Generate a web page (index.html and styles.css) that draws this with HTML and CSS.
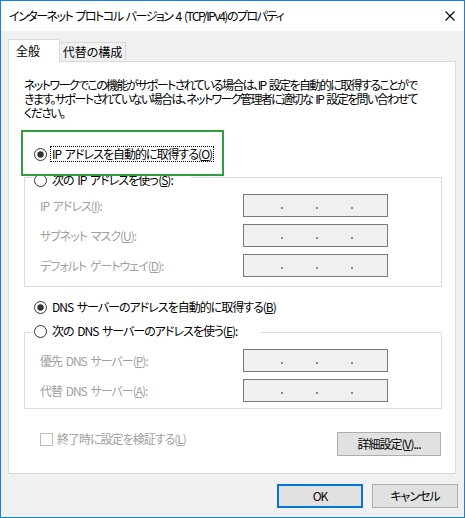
FILE: index.html
```html
<!DOCTYPE html>
<html lang="ja">
<head>
<meta charset="utf-8">
<title>インターネット プロトコル バージョン 4 (TCP/IPv4)のプロパティ</title>
<link rel="stylesheet" href="styles.css">
</head>
<body>
<div class="window">
  <div class="titlebar">
    <span class="title">インターネット プロトコル バージョン 4 (TCP/IPv4)のプロパティ</span>
    <svg class="close" width="10" height="10" viewBox="0 0 10 10"><path d="M0.5 0.5 L9.5 9.5 M9.5 0.5 L0.5 9.5" stroke="#000" stroke-width="1.1" fill="none"/></svg>
  </div>
  <div class="tabs">
    <div class="tab active">全般</div>
    <div class="tab">代替の構成</div>
  </div>
  <div class="panel">
    <p class="desc">ネットワークでこの機能がサポートされている場合は、IP 設定を自動的に取得することがで<br>きます。サポートされていない場合は、ネットワーク管理者に適切な IP 設定を問い合わせて<br>ください。</p>

    <div class="option first">
      <svg class="radio" width="13" height="13" viewBox="0 0 13 13"><circle cx="6.5" cy="6.5" r="6" fill="#fff" stroke="#333"/><circle cx="6.5" cy="6.5" r="3.2" fill="#333"/></svg>
      <span class="label focus">IP アドレスを自動的に取得する(<u>O</u>)</span>
    </div>

    <div class="group group-ip">
      <div class="legend legend-ip">
        <svg class="radio" width="13" height="13" viewBox="0 0 13 13"><circle cx="6.5" cy="6.5" r="6" fill="#fff" stroke="#333"/></svg>
        <span class="label">次の IP アドレスを使う(<u>S</u>):</span>
      </div>
      <div class="fields">
        <div class="field"><span class="flabel">IP アドレス(<u>I</u>):</span><span class="ipbox"><i></i><i></i><i></i></span></div>
        <div class="field"><span class="flabel">サブネット マスク(<u>U</u>):</span><span class="ipbox"><i></i><i></i><i></i></span></div>
        <div class="field"><span class="flabel">デフォルト ゲートウェイ(<u>D</u>):</span><span class="ipbox"><i></i><i></i><i></i></span></div>
      </div>
    </div>

    <div class="option dns-auto">
      <svg class="radio" width="13" height="13" viewBox="0 0 13 13"><circle cx="6.5" cy="6.5" r="6" fill="#fff" stroke="#333"/><circle cx="6.5" cy="6.5" r="3.2" fill="#333"/></svg>
      <span class="label">DNS サーバーのアドレスを自動的に取得する(<u>B</u>)</span>
    </div>

    <div class="group group-dns">
      <div class="legend legend-dns">
        <svg class="radio" width="13" height="13" viewBox="0 0 13 13"><circle cx="6.5" cy="6.5" r="6" fill="#fff" stroke="#333"/></svg>
        <span class="label">次の DNS サーバーのアドレスを使う(<u>E</u>):</span>
      </div>
      <div class="fields">
        <div class="field"><span class="flabel">優先 DNS サーバー(<u>P</u>):</span><span class="ipbox"><i></i><i></i><i></i></span></div>
        <div class="field"><span class="flabel">代替 DNS サーバー(<u>A</u>):</span><span class="ipbox"><i></i><i></i><i></i></span></div>
      </div>
    </div>

    <div class="bottom-row">
      <div class="check">
        <span class="checkbox"></span>
        <span class="flabel">終了時に設定を検証する(<u>L</u>)</span>
      </div>
      <button class="btn advanced">詳細設定(<u>V</u>)...</button>
    </div>
  </div>
  <div class="footer">
    <button class="btn default">OK</button>
    <button class="btn">キャンセル</button>
  </div>
  <div class="highlight"></div>
</div>
</body>
</html>
```
FILE: styles.css
```css
* { box-sizing: border-box; }
html, body { margin: 0; padding: 0; background: #fff; }
body {
  font-family: "Noto Sans CJK JP", "Noto Sans", sans-serif;
  font-size: 12px;
  color: #000;
  font-feature-settings: "palt";
  letter-spacing: -1px;
  word-spacing: 2px;
}
.window {
  position: relative;
  width: 465px;
  height: 518px;
  border: 1px solid #1a7fd6;
  background: #f0f0f0;
  display: flex;
  flex-direction: column;
}
.titlebar {
  height: 30px;
  background: #fff;
  display: flex;
  align-items: center;
  padding-left: 8px;
}
.title { line-height: 16px; white-space: nowrap; letter-spacing: -1.5px; }
.close { margin-left: auto; margin-right: 9px; }

.tabs {
  display: flex;
  align-items: flex-end;
  height: 22px;
  margin: 8px 0 0 7px;
  letter-spacing: 0;
}
.tab {
  height: 19px;
  width: 67px;
  margin-left: -1px;
  border: 1px solid #d9d9d9;
  border-bottom: none;
  background: #f0f0f0;
  text-align: center;
  line-height: 18px;
  white-space: nowrap;
}
.tab.active {
  position: relative;
  z-index: 1;
  margin-left: 0;
  width: 52px;
  height: 23px;
  margin-bottom: -1px;
  background: #fff;
  text-align: left;
  padding-left: 7px;
  line-height: 22px;
}
.panel {
  margin-left: 7px;
  width: 448px;
  height: 413px;
  border: 1px solid #d9d9d9;
  background: #fff;
  padding: 16px 13px 0 15px;
}
.desc {
  margin: 0;
  line-height: 14px;
  white-space: nowrap;
  letter-spacing: -1.6px;
}
.option {
  display: flex;
  align-items: center;
  height: 16px;
  padding-left: 10px;
}
.option.first { margin-top: 26px; }
.option.dns-auto { margin-top: 12px; }
.radio { flex: none; display: block; }
.label { margin-left: 5px; line-height: 16px; white-space: nowrap; }
.label.focus {
  margin-left: 3px;
  padding: 0 1px;
  border: 1px dotted #000;
  line-height: 14px;
}
.group {
  border: 1px solid #dcdcdc;
}
.group-ip { margin-top: 15px; padding-bottom: 9px; }
.group-dns { margin-top: 17px; padding-bottom: 6px; }
.legend {
  display: flex;
  align-items: center;
  height: 16px;
  background: #fff;
  margin-left: 8px;
  padding-left: 1px;
}
.legend-ip { width: 158px; margin-top: -6px; margin-bottom: 6px; }
.legend-dns { width: 228px; margin-top: -10px; margin-bottom: 10px; }
.fields {
  display: flex;
  flex-direction: column;
  gap: 7px;
  padding-left: 15px;
}
.field {
  display: grid;
  grid-template-columns: 203px 145px;
  align-items: center;
  height: 23px;
}
.flabel { color: #a0a0a0; white-space: nowrap; line-height: 16px; }
.ipbox {
  height: 23px;
  border: 1px solid #7a7a7a;
  background: #f0f0f0;
  display: flex;
  align-items: flex-end;
  padding: 0 0 7px 37px;
  gap: 33px;
}
.ipbox i {
  display: block;
  width: 2px;
  height: 2px;
  background: #8c8c8c;
}
.bottom-row {
  margin-top: 23px;
  display: flex;
  justify-content: space-between;
  align-items: flex-start;
  padding-right: 1px;
}
.check {
  display: flex;
  align-items: center;
  height: 16px;
  margin-left: 16px;
  margin-top: -1px;
}
.checkbox {
  width: 13px;
  height: 13px;
  border: 1px solid #bcbcbc;
  background: #fff;
  margin-right: 4px;
}
.btn {
  font-family: inherit;
  font-size: 12px;
  font-feature-settings: "palt";
  letter-spacing: inherit;
  word-spacing: inherit;
  color: #000;
  background: #e1e1e1;
  border: 1px solid #adadad;
  padding: 0;
  margin: 0;
  height: 24px;
  width: 86px;
  line-height: 20px;
}
.btn.advanced { width: 104px; }
.btn.default { border: 2px solid #0078d7; }
.footer {
  display: flex;
  justify-content: flex-end;
  gap: 9px;
  margin-top: 10px;
  padding-right: 6px;
}
.highlight {
  position: absolute;
  left: 20px;
  top: 129px;
  width: 203px;
  height: 46px;
  border: 2px solid #2f9e3c;
  pointer-events: none;
}
```
